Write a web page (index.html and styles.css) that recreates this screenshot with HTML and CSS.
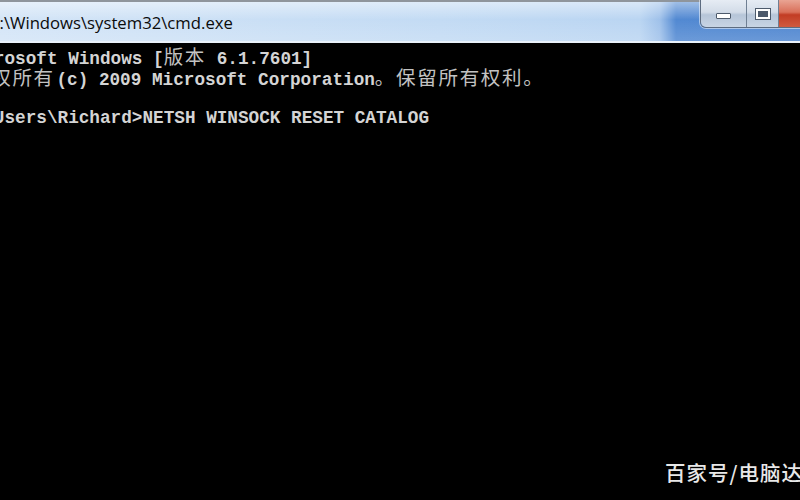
FILE: index.html
```html
<!DOCTYPE html>
<html lang="zh-CN">

<head>
    <meta charset="UTF-8">
    <title>cmd.exe</title>
    <link rel="stylesheet" href="styles.css">
</head>

<body>
    <div class="window">
        <div class="titlebar">
            <div class="title">C:\Windows\system32\cmd.exe</div>
            <div class="controls">
                <div class="btn min"><span class="dash"></span></div>
                <div class="btn max"><span class="box"></span></div>
                <div class="btn close"></div>
            </div>
        </div>

        <div class="console">
            <div class="lines">
                <div class="line">Microsoft Windows [<span class="cjk">版本</span> 6.1.7601]</div>
                <div class="line"><span class="cjk lead">版权所有</span> (c) 2009 Microsoft Corporation<span class="cjk">。保留所有权利。</span></div>
                <div class="line"> </div>
                <div class="line">C:\Users\Richard&gt;NETSH WINSOCK RESET CATALOG</div>
            </div>
            <div class="mark">百家号/电脑达人</div>
        </div>
    </div>
</body>

</html>
```

FILE: styles.css
```css
body {
    margin: 0;
    background: #000;
}

.window {
    width: 800px;
    height: 500px;
    overflow: hidden;
    display: flex;
    flex-direction: column;
}

/* title bar */
.titlebar {
    height: 43px;
    display: flex;
    align-items: flex-start;
    box-sizing: border-box;
    border-top: 2px solid #8f959c;
    border-bottom: 2px solid #e9f1fa;
    background:
        linear-gradient(to bottom, rgba(255, 255, 255, 0.45) 0%, rgba(255, 255, 255, 0) 45%, rgba(255, 255, 255, 0.15) 100%),
        linear-gradient(to right, #d4e5f7 0%, #c3dbf4 55%, #bad5f2 80%, #9fc1ea 82.5%, #5289d2 84.5%, #4f86d0 100%);
}

.title {
    font-family: "Open Sans", "Liberation Sans", sans-serif;
    font-size: 16.7px;
    color: #0b0b0b;
    margin-left: -11px;
    margin-top: 9px;
    white-space: nowrap;
}

.controls {
    margin-left: auto;
    margin-top: -2px;
    margin-right: -24px;
    display: flex;
    height: 27px;
    border: 1px solid #5d6c80;
    border-top: none;
    border-radius: 0 0 6px 6px;
    overflow: hidden;
    box-shadow: 0 0 0 1px rgba(255, 255, 255, 0.5);
}

.btn {
    display: flex;
    align-items: center;
    justify-content: center;
    border-right: 1px solid #6f7f93;
}

.min {
    width: 45px;
    background: linear-gradient(to bottom, #e6ecf4 0%, #d3dce8 45%, #b6c5d8 55%, #c8d5e4 100%);
}

.max {
    width: 31px;
    background: linear-gradient(to bottom, #e6ecf4 0%, #d3dce8 45%, #b6c5d8 55%, #c8d5e4 100%);
}

.close {
    width: 44px;
    border-right: none;
    background: linear-gradient(to bottom, #e9a493 0%, #d9705a 45%, #c23c24 55%, #cf5a3f 100%);
}

.dash {
    width: 13px;
    height: 4px;
    background: #fff;
    border: 1px solid #4d5a6b;
    border-radius: 1px;
    margin-top: 5px;
}

.box {
    width: 10px;
    height: 6px;
    border: 2px solid #fff;
    outline: 1px solid #4d5a6b;
    background: #4d5a6b;
    box-shadow: inset 0 0 0 1px #4d5a6b;
}

/* console area */
.console {
    flex: 1;
    position: relative;
    background: #000;
    padding-top: 2px;
}

.lines {
    margin-left: -38px;
    font-family: "Liberation Mono", monospace;
    font-weight: bold;
    font-size: 17.7px;
    line-height: 21px;
    color: #d4d4d4;
}

.line {
    white-space: pre;
    height: 21px;
}

.cjk {
    font-family: "Noto Sans CJK SC", sans-serif;
    font-weight: normal;
    font-size: 19.5px;
    line-height: 21px;
    letter-spacing: 1.7px;
    color: #c2c2c2;
}

.lead {
    margin-left: 8px;
    margin-right: -9px;
}

.mark {
    position: absolute;
    left: 665px;
    top: 414px;
    font-family: "Noto Sans CJK SC", sans-serif;
    font-size: 20.5px;
    font-weight: 500;
    letter-spacing: 1px;
    color: #e8e8e8;
    white-space: nowrap;
}
```
